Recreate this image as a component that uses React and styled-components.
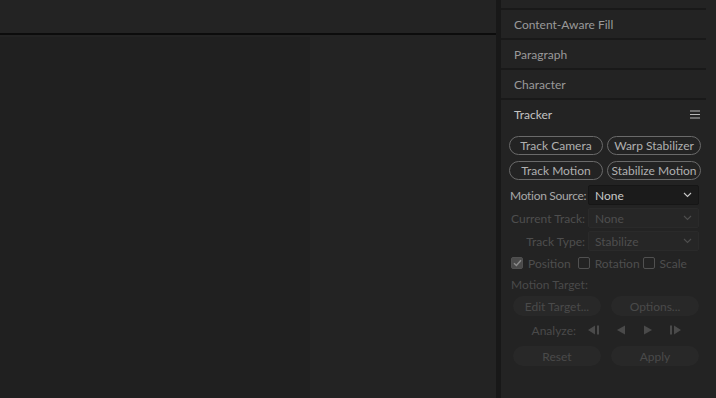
import React from "react";
import styled, { createGlobalStyle } from "styled-components";

const Global = createGlobalStyle`
  html, body {
    margin: 0;
    padding: 0;
    background: #232323;
  }
  body {
    font-family: Lato, "Liberation Sans", sans-serif;
    font-size: 12px;
  }
`;

const Shell = styled.div`
  display: flex;
  width: 716px;
  height: 398px;
  overflow: hidden;
  background: #232323;
`;

const Viewer = styled.div`
  width: 496px;
  display: flex;
  flex-direction: column;
`;

const ViewerTop = styled.div`
  height: 33px;
  background: #232323;
  border-bottom: 2px solid #0c0c0c;
`;

const ViewerBody = styled.div`
  flex: 1;
  display: flex;
  padding-top: 2px;
`;

const Canvas = styled.div`
  width: 310px;
  background: #202020;
`;

const CanvasRest = styled.div`
  flex: 1;
  background: #232323;
`;

const Splitter = styled.div`
  width: 5px;
  background: #181818;
`;

const Dock = styled.div`
  flex: 1;
  display: flex;
  flex-direction: column;
  padding: 0 10px 0 0;
  background: #232323;
`;

const DockTop = styled.div`
  height: 8px;
`;

const PanelHead = styled.div`
  height: 28px;
  border-top: 2px solid #191919;
  display: flex;
  align-items: center;
  justify-content: space-between;
  padding: 0 6px 0 13px;
  color: ${(p) => (p.$active ? "#c4c4c4" : "#9a9a9a")};
  font-size: 12px;
`;

const Menu = styled.svg`
  width: 10px;
  height: 9px;
`;

const TrackerBody = styled.div`
  padding: 8px 0 0 8px;
  display: flex;
  flex-direction: column;
`;

const PillGrid = styled.div`
  display: grid;
  grid-template-columns: 94px 94px;
  gap: 6px 4px;
  margin-bottom: 5px;
`;

const Pill = styled.button`
  height: 19px;
  border: 1px solid #6a6a6a;
  border-radius: 10px;
  background: transparent;
  color: #b0b0b0;
  font-family: inherit;
  font-size: 12px;
  padding: 0;
  white-space: nowrap;
`;

const FieldRow = styled.div`
  display: flex;
  align-items: center;
  height: 20px;
  margin-bottom: 3px;
`;

const FieldLabel = styled.span`
  width: 79px;
  padding-right: 3px;
  box-sizing: border-box;
  text-align: ${(p) => (p.$left ? "left" : "right")};
  padding-left: ${(p) => (p.$left ? "1px" : "0")};
  color: ${(p) => (p.$dim ? "#4e4e4e" : "#a8a8a8")};
  white-space: nowrap;
  letter-spacing: ${(p) => (p.$left ? "-0.3px" : "0")};
`;

const Select = styled.div`
  width: 111px;
  height: 20px;
  box-sizing: border-box;
  display: flex;
  align-items: center;
  justify-content: space-between;
  padding: 0 6px 0 6px;
  background: ${(p) => (p.$dim ? "#262626" : "#1b1b1b")};
  border: 1px solid ${(p) => (p.$dim ? "#2a2a2a" : "#161616")};
  border-radius: 2px;
  color: ${(p) => (p.$dim ? "#4e4e4e" : "#c8c8c8")};
`;

const Chevron = styled.svg`
  width: 9px;
  height: 6px;
`;

const CheckRow = styled.div`
  display: flex;
  align-items: center;
  height: 18px;
  margin: 0 0 6px 2px;
`;

const CheckItem = styled.label`
  display: flex;
  align-items: center;
  gap: 5px;
  margin-right: ${(p) => p.$gap}px;
  color: #4e4e4e;
`;

const Box = styled.span`
  width: 12px;
  height: 12px;
  box-sizing: border-box;
  border: 1px solid #505050;
  border-radius: 2px;
  background: ${(p) => (p.$on ? "#4a4a4a" : "transparent")};
  display: flex;
  align-items: center;
  justify-content: center;
`;

const Caption = styled.div`
  color: #4a4a4a;
  height: 14px;
  line-height: 14px;
  margin: 0 0 4px 2px;
`;

const DimGrid = styled.div`
  display: grid;
  grid-template-columns: 88px 88px;
  gap: 10px;
  margin-left: 4px;
`;

const DimButton = styled.div`
  height: 20px;
  border-radius: 10px;
  background: #282828;
  color: #4a4a4a;
  display: flex;
  align-items: center;
  justify-content: center;
  white-space: nowrap;
`;

const AnalyzeRow = styled.div`
  display: flex;
  align-items: center;
  height: 20px;
  margin: 4px 0 6px;
`;

const AnalyzeLabel = styled.span`
  width: 67px;
  text-align: right;
  color: #4a4a4a;
  margin-right: 12px;
`;

const Transport = styled.div`
  display: flex;
  gap: 15px;
`;

const Glyph = styled.svg`
  width: 12px;
  height: 10px;
`;

const Check = () => (
  <svg width="9" height="8" viewBox="0 0 9 8">
    <path d="M1 4.2 L3.4 6.5 L8 1.2" fill="none" stroke="#8a8a8a" strokeWidth="1.5" />
  </svg>
);

const Down = () => (
  <Chevron viewBox="0 0 9 6">
    <path d="M1 1 L4.5 4.5 L8 1" fill="none" stroke="currentColor" strokeWidth="1.1" />
  </Chevron>
);

export default function App() {
  return (
    <>
      <Global />
      <Shell>
        <Viewer>
          <ViewerTop />
          <ViewerBody>
            <Canvas />
            <CanvasRest />
          </ViewerBody>
        </Viewer>
        <Splitter />
        <Dock>
          <DockTop />
          <PanelHead>Content-Aware Fill</PanelHead>
          <PanelHead>Paragraph</PanelHead>
          <PanelHead>Character</PanelHead>
          <PanelHead $active>
            Tracker
            <Menu viewBox="0 0 10 9">
              <path d="M0 1h10M0 4.5h10M0 8h10" stroke="#b8b8b8" strokeWidth="1" />
            </Menu>
          </PanelHead>
          <TrackerBody>
            <PillGrid>
              <Pill>Track Camera</Pill>
              <Pill>Warp Stabilizer</Pill>
              <Pill>Track Motion</Pill>
              <Pill>Stabilize Motion</Pill>
            </PillGrid>
            <FieldRow>
              <FieldLabel $left>Motion Source:</FieldLabel>
              <Select>
                None
                <Down />
              </Select>
            </FieldRow>
            <FieldRow>
              <FieldLabel $dim>Current Track:</FieldLabel>
              <Select $dim>
                None
                <Down />
              </Select>
            </FieldRow>
            <FieldRow>
              <FieldLabel $dim>Track Type:</FieldLabel>
              <Select $dim>
                Stabilize
                <Down />
              </Select>
            </FieldRow>
            <CheckRow>
              <CheckItem $gap={7}>
                <Box $on>
                  <Check />
                </Box>
                Position
              </CheckItem>
              <CheckItem $gap={3}>
                <Box />
                Rotation
              </CheckItem>
              <CheckItem $gap={0}>
                <Box />
                Scale
              </CheckItem>
            </CheckRow>
            <Caption>Motion Target:</Caption>
            <DimGrid>
              <DimButton>Edit Target...</DimButton>
              <DimButton>Options...</DimButton>
            </DimGrid>
            <AnalyzeRow>
              <AnalyzeLabel>Analyze:</AnalyzeLabel>
              <Transport>
                <Glyph viewBox="0 0 12 10">
                  <path d="M0 5 L7 0.5 V9.5 Z M9 0.5 H11 V9.5 H9 Z" fill="#4a4a4a" />
                </Glyph>
                <Glyph viewBox="0 0 12 10">
                  <path d="M2 5 L10 0.5 V9.5 Z" fill="#4a4a4a" />
                </Glyph>
                <Glyph viewBox="0 0 12 10">
                  <path d="M10 5 L2 0.5 V9.5 Z" fill="#4a4a4a" />
                </Glyph>
                <Glyph viewBox="0 0 12 10">
                  <path d="M12 5 L5 0.5 V9.5 Z M1 0.5 H3 V9.5 H1 Z" fill="#4a4a4a" />
                </Glyph>
              </Transport>
            </AnalyzeRow>
            <DimGrid>
              <DimButton>Reset</DimButton>
              <DimButton>Apply</DimButton>
            </DimGrid>
          </TrackerBody>
        </Dock>
      </Shell>
    </>
  );
}
